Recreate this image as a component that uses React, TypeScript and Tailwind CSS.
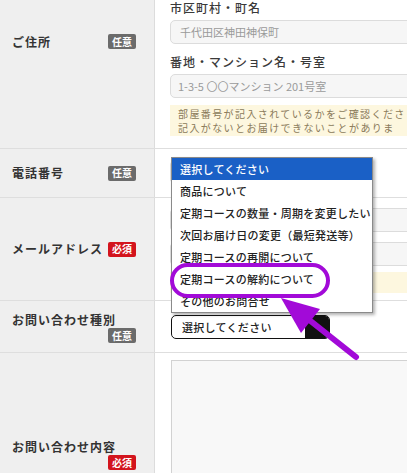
import React from "react";

const FONT = { fontFamily: '"Noto Sans CJK JP", "Noto Sans", sans-serif' };

function Badge({ kind }: { kind: "opt" | "req" }) {
  return (
    <span
      className={
        "inline-flex h-[15px] w-[28px] shrink-0 items-center justify-center rounded-[2px] text-[10px] font-bold leading-none text-white " +
        (kind === "opt" ? "bg-[#6b6b6b]" : "bg-[#d3141d]")
      }
    >
      {kind === "opt" ? "任意" : "必須"}
    </span>
  );
}

function Label({ children }: { children: React.ReactNode }) {
  return <span className="text-[12px] font-bold leading-[16px] tracking-[1px] text-[#333]">{children}</span>;
}

const options = [
  "選択してください",
  "商品について",
  "定期コースの数量・周期を変更したい",
  "次回お届け日の変更（最短発送等）",
  "定期コースの再開について",
  "定期コースの解約について",
  "その他のお問合せ",
];

export default function App() {
  return (
    <div className="relative h-[473px] w-[407px] overflow-hidden bg-white" style={FONT}>
      {/* Row 1: address */}
      <div className="grid h-[149px] grid-cols-[155px_1fr] border-b border-[#dedede]">
        <div className="flex items-start justify-between border-r border-[#dcdcdc] bg-[#efefef] pl-[12px] pr-[18px] pt-[34px]">
          <Label>ご住所</Label>
          <Badge kind="opt" />
        </div>
        <div className="pl-[15px]">
          <div className="text-[12px] font-medium leading-[16px] tracking-[1px] text-[#3a3a3a]">市区町村・町名</div>
          <div className="mt-[4px] flex h-[24px] w-[260px] items-center rounded-[5px] border border-[#dcdcdc] bg-[#f6f6f6] pl-[9px] text-[11px] text-[#9a9a9a]">
            千代田区神田神保町
          </div>
          <div className="mt-[10px] text-[12px] font-medium leading-[16px] tracking-[1px] text-[#3a3a3a]">番地・マンション名・号室</div>
          <div className="mt-[4px] flex h-[24px] w-[260px] items-center rounded-[5px] border border-[#dcdcdc] bg-[#f6f6f6] pl-[7px] text-[11px] text-[#9a9a9a]">
            1-3-5 〇〇マンション 201号室
          </div>
          <div className="mt-[7px] h-[31px] w-[237px] overflow-hidden whitespace-nowrap bg-[#fdf7df] pl-[8px] pt-[2px] text-[10px] leading-[14px] tracking-[1.4px] text-[#8a7a5a]">
            <div>部屋番号が記入されているかをご確認くださ</div>
            <div>記入がないとお届けできないことがありま</div>
          </div>
        </div>
      </div>

      {/* Row 2: phone */}
      <div className="grid h-[49px] grid-cols-[155px_1fr] border-b border-[#dedede]">
        <div className="flex items-center justify-between border-r border-[#dcdcdc] bg-[#efefef] pl-[12px] pr-[18px]">
          <Label>電話番号</Label>
          <Badge kind="opt" />
        </div>
        <div className="pl-[15px] pt-[11px]">
          <div className="h-[24px] w-[190px] rounded-[5px] border border-[#dcdcdc] bg-[#f6f6f6]" />
        </div>
      </div>

      {/* Row 3: email */}
      <div className="grid h-[103px] grid-cols-[155px_1fr] border-b border-[#dedede]">
        <div className="flex items-center justify-between border-r border-[#dcdcdc] bg-[#efefef] pl-[12px] pr-[18px]">
          <Label>メールアドレス</Label>
          <Badge kind="req" />
        </div>
        <div className="pl-[15px] pt-[10px]">
          <div className="h-[24px] w-[260px] rounded-[5px] border border-[#dcdcdc] bg-[#f6f6f6]" />
          <div className="mt-[10px] h-[24px] w-[260px] rounded-[5px] border border-[#dcdcdc] bg-[#f6f6f6]" />
          <div className="mt-[6px] h-[21px] w-[260px] bg-[#fdf7df]" />
        </div>
      </div>

      {/* Row 4: inquiry type */}
      <div className="grid h-[52px] grid-cols-[155px_1fr] border-b border-[#dedede]">
        <div className="flex flex-col items-start border-r border-[#dcdcdc] bg-[#efefef] pl-[12px] pr-[18px] pt-[11px]">
          <Label>お問い合わせ種別</Label>
          <div className="flex w-full justify-end">
            <Badge kind="opt" />
          </div>
        </div>
        <div className="pl-[16px] pt-[14px]">
          <div className="flex h-[24px] w-[159px] overflow-hidden rounded-[5px] border-[1.5px] border-[#111] bg-white">
            <div className="flex flex-1 items-center pl-[10px] text-[11px] font-medium tracking-[0.3px] text-[#222]">選択してください</div>
            <div className="w-[24px] bg-[#111]" />
          </div>
        </div>
      </div>

      {/* Row 5: inquiry content */}
      <div className="grid h-[140px] grid-cols-[155px_1fr]">
        <div className="flex flex-col items-start border-r border-[#dcdcdc] bg-[#efefef] pl-[12px] pr-[18px] pt-[86px]">
          <Label>お問い合わせ内容</Label>
          <div className="flex w-full justify-end">
            <Badge kind="req" />
          </div>
        </div>
        <div className="pl-[16px] pt-[7px]">
          <div className="h-full w-full border-l border-t border-[#d2d2d2] bg-[#f8f8f8]" />
        </div>
      </div>

      {/* Open dropdown list */}
      <div className="absolute left-[171px] top-[157px] w-[202px] border border-[#8a8a8a] bg-white shadow-[2px_2px_3px_rgba(0,0,0,0.3)]">
        {options.map((o, i) => (
          <div
            key={o}
            className={
              "flex h-[22px] items-center whitespace-nowrap pl-[8px] text-[11px] font-medium tracking-[0.25px] " +
              (i === 0 ? "bg-[#1a60c6] text-white" : "text-[#222]")
            }
          >
            {o}
          </div>
        ))}
      </div>

      {/* Annotation */}
      <svg className="pointer-events-none absolute left-0 top-0" width="407" height="473" viewBox="0 0 407 473">
        <rect x="172" y="265" width="156" height="31" rx="15.5" fill="none" stroke="#a20ad8" strokeWidth="4" />
        <line x1="356" y1="357" x2="303" y2="315" stroke="#a20ad8" strokeWidth="6" strokeLinecap="round" />
        <polygon points="281,298 320,309 301,333" fill="#a20ad8" />
      </svg>
    </div>
  );
}
